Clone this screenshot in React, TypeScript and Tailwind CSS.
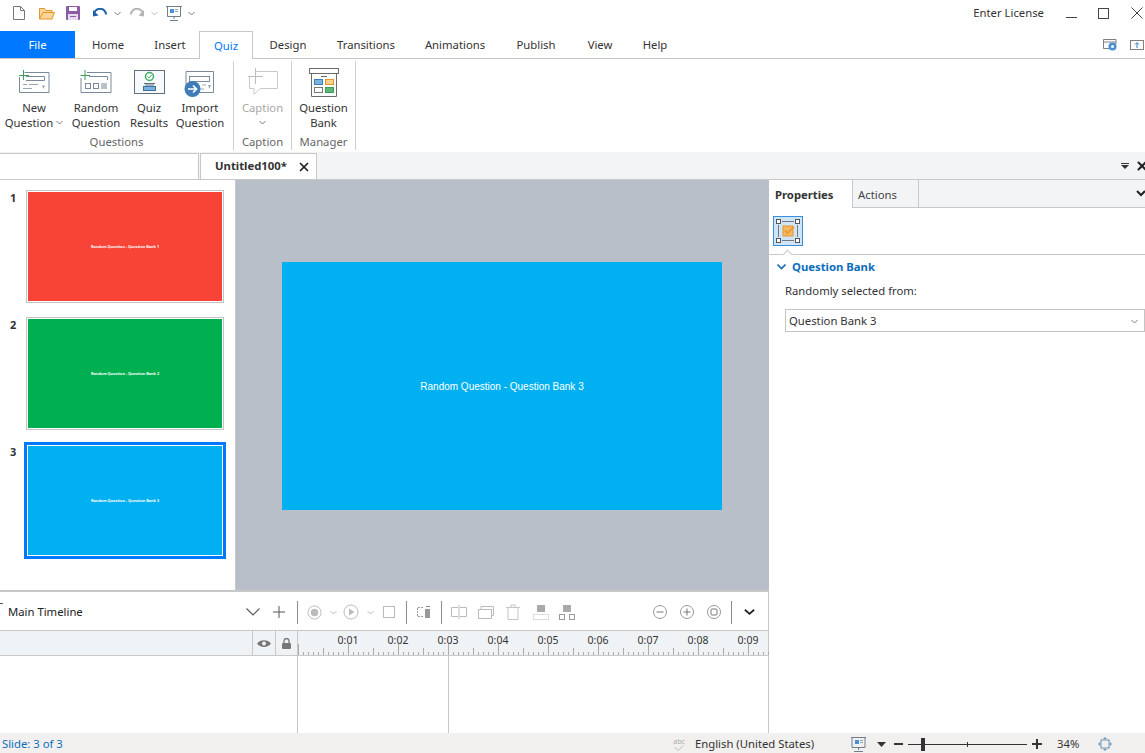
import React from 'react';
import { X } from 'lucide-react';

const tabs = [
  { label: 'Home', w: 'w-[66px]' },
  { label: 'Insert', w: 'w-[58px]' },
  { label: 'Quiz', w: 'w-[54px]', active: true },
  { label: 'Design', w: 'w-[70px]' },
  { label: 'Transitions', w: 'w-[86px]' },
  { label: 'Animations', w: 'w-[92px]' },
  { label: 'Publish', w: 'w-[70px]' },
  { label: 'View', w: 'w-[58px]' },
  { label: 'Help', w: 'w-[52px]' },
];

const Caret = ({ className = '' }: { className?: string }) => (
  <svg width="7" height="5" viewBox="0 0 7 5" className={className}>
    <path d="M0.5 1 L3.5 4 L6.5 1" fill="none" stroke="#7a7a7a" />
  </svg>
);

const QuickAccess = () => (
  <div className="flex h-[31px] items-center pb-[5px] pl-[12px]">
    <svg width="14" height="16" viewBox="0 0 14 16" className="mr-[13px]">
      <path d="M1.5 1.5H8.5L12.5 5.5V14.5H1.5Z M8.5 1.5V5.5H12.5" fill="#fff" stroke="#777" />
    </svg>
    <svg width="16" height="13" viewBox="0 0 16 13" className="mr-[11px]">
      <path d="M0.5 12V1.5H5.5L7 3.5H13V5.5H4L0.5 12H13L15.5 5.5H4" fill="#fcd59a" stroke="#e8962b" />
    </svg>
    <svg width="14" height="14" viewBox="0 0 14 14" className="mr-[13px]">
      <rect x="0" y="0" width="14" height="14" rx="1" fill="#8e5ba6" />
      <rect x="3" y="1" width="8" height="4" fill="#fff" />
      <rect x="2" y="8" width="10" height="6" fill="#e8dcef" />
      <rect x="4" y="10" width="6" height="1" fill="#8e5ba6" />
    </svg>
    <svg width="14" height="10" viewBox="0 0 14 10" className="mr-[7px]">
      <path d="M1 7 A6 6 0 0 1 13 6.5" fill="none" stroke="#1d5fa8" strokeWidth="2" />
      <path d="M0 2 L5.5 7.5 L0 8.5Z" fill="#1d5fa8" />
    </svg>
    <Caret className="mr-[9px]" />
    <svg width="14" height="10" viewBox="0 0 14 10" className="mr-[7px]">
      <path d="M13 7 A6 6 0 0 0 1 6.5" fill="none" stroke="#b5b5b5" strokeWidth="2" />
      <path d="M14 2 L8.5 7.5 L14 8.5Z" fill="#b5b5b5" />
    </svg>
    <Caret className="mr-[8px] opacity-50" />
    <svg width="16" height="15" viewBox="0 0 16 15" className="mr-[6px]">
      <path d="M0 0.5H16 M1.5 0.5V10.5H14.5V0.5 M8 10.5V13 M4 14.5H12" fill="none" stroke="#6f7f8c" />
      <rect x="4" y="3" width="4" height="4" fill="#4a90d9" />
      <path d="M9 3.5H12 M9 5.5H12" stroke="#8aa" />
    </svg>
    <Caret />
    <span className="ml-auto mr-[22px] text-[11.3px] text-[#333]">Enter License</span>
    <div className="flex items-center gap-[21px] pr-[2px]">
      <svg width="11" height="12" viewBox="0 0 11 12"><path d="M0 10.5H11" stroke="#444" /></svg>
      <svg width="11" height="11" viewBox="0 0 11 11"><rect x="0.5" y="0.5" width="10" height="10" fill="none" stroke="#444" /></svg>
      <svg width="12" height="12" viewBox="0 0 12 12" className="ml-px"><path d="M0.5 0.5L11.5 11.5 M11.5 0.5L0.5 11.5" stroke="#444" /></svg>
    </div>
  </div>
);

const TabRow = () => (
  <div className="flex h-[28px] border-b border-[#c8c8c8]">
    <div className="flex h-[27px] w-[75px] items-center justify-center bg-[#0078ff] pt-px text-[11.3px] text-white">File</div>
    {tabs.map((t) =>
      t.active ? (
        <div key={t.label} className={`${t.w} -mb-px flex h-[28px] items-center justify-center border border-b-0 border-[#c8c8c8] bg-white pt-px text-[11.3px] text-[#0078ff]`}>
          {t.label}
        </div>
      ) : (
        <div key={t.label} className={`${t.w} flex items-center justify-center pt-px text-[11.3px] text-[#333]`}>
          {t.label}
        </div>
      )
    )}
    <div className="ml-auto flex items-center gap-[13px] pr-px">
      <svg width="14" height="12" viewBox="0 0 14 12">
        <path d="M0.5 0.5H13V5 M0.5 0.5V9.5H6 M0.5 3H13" fill="none" stroke="#808080" />
        <circle cx="9.5" cy="7.5" r="4" fill="#4a90d9" />
        <circle cx="9.5" cy="7.5" r="1.5" fill="#fff" />
      </svg>
      <svg width="14" height="10" viewBox="0 0 14 10">
        <rect x="0.5" y="0.5" width="13" height="9" fill="none" stroke="#808080" />
        <path d="M7 8V3 M5 4.5L7 2.5L9 4.5" fill="none" stroke="#2f7fc8" />
      </svg>
    </div>
  </div>
);

const NewQuestionIcon = () => (
  <svg width="32" height="24" viewBox="0 0 32 24" className="mt-[9px]">
    <path d="M6.5 2.5H31V22.5H1.5V7" fill="none" stroke="#7b8a99" />
    <path d="M8 6.5H26.5V10.5H8" fill="none" stroke="#7b8a99" />
    <path d="M1 5.5H11 M5.5 0V10" stroke="#3e9d5c" />
    <path d="M5 14.5H9 M11 14.5H20 M5 18.5H14" stroke="#9aa7b3" />
    <path d="M24 15.5H27 L25.5 19Z" fill="#9aa7b3" />
  </svg>
);

const RandomIcon = () => (
  <svg width="32" height="24" viewBox="0 0 32 24" className="mt-[9px]">
    <path d="M7 2.5H31V22.5H1V8" fill="none" stroke="#7b8a99" />
    <path d="M9 6.5H27.5V10" fill="none" stroke="#7b8a99" />
    <path d="M0.5 5.5H10 M5 0V10" stroke="#3e9d5c" />
    <rect x="5.5" y="13.5" width="5" height="5" fill="none" stroke="#7b8a99" />
    <rect x="13.5" y="13.5" width="5" height="5" fill="none" stroke="#7b8a99" />
    <rect x="21" y="13" width="6" height="6" fill="#b8c0c8" />
  </svg>
);

const ResultsIcon = () => (
  <svg width="31" height="24" viewBox="0 0 31 24" className="mt-[9px]">
    <rect x="0.5" y="0.5" width="30" height="23" fill="#f8f9fa" stroke="#5f6f7f" />
    <circle cx="15.5" cy="6.5" r="4" fill="none" stroke="#3fae64" strokeWidth="1.5" />
    <path d="M13.5 6.5L15 8L17.5 5" fill="none" stroke="#3fae64" />
    <path d="M10 13.5H21 M11 15H20" stroke="#5f6f7f" />
    <rect x="9.5" y="16.5" width="12" height="4" fill="#7ab3e0" stroke="#3b6f9c" />
  </svg>
);

const ImportIcon = () => (
  <svg width="32" height="27" viewBox="0 0 32 27" className="mt-[10px]">
    <path d="M2 14V0.5H29.5V21.5H14" fill="none" stroke="#7b8a99" />
    <rect x="5.5" y="5.5" width="20" height="5" fill="none" stroke="#7b8a99" />
    <path d="M18 14H22 M16 18H20" stroke="#9aa7b3" />
    <path d="M24 14H27 L25.5 18Z" fill="#9aa7b3" />
    <circle cx="8.5" cy="18" r="8" fill="#3f7cb8" />
    <path d="M4 18H12 M9 14.5L12.5 18L9 21.5" fill="none" stroke="#fff" strokeWidth="1.7" />
  </svg>
);

const CaptionIcon = () => (
  <svg width="30" height="28" viewBox="0 0 30 28" className="mt-[7px]">
    <path d="M8 3.5H29.5V20.5H12L6 26.5V20.5H1.5V9" fill="none" stroke="#c9c9c9" />
    <path d="M0 8.5H15 M7.5 0V16" stroke="#bdbdbd" />
  </svg>
);

const BankIcon = () => (
  <svg width="30" height="29" viewBox="0 0 30 29" className="mt-[7px]">
    <rect x="0.5" y="0.5" width="29" height="5" fill="none" stroke="#6b6b6b" />
    <path d="M2.5 5.5V28.5H27.5V5.5" fill="none" stroke="#6b6b6b" />
    <path d="M12 8.5H18" stroke="#6b6b6b" />
    <rect x="5.5" y="11.5" width="8" height="5" fill="#7ab3e0" stroke="#3b7fb8" />
    <rect x="16.5" y="11.5" width="8" height="5" fill="#fbd38d" stroke="#e8962b" />
    <rect x="5.5" y="19.5" width="8" height="5" fill="#fff" stroke="#777" />
    <rect x="16.5" y="19.5" width="8" height="5" fill="#5cb874" stroke="#3f9d5c" />
  </svg>
);

const RibbonButton = ({ icon, lines, w, caret, disabled }: { icon: React.ReactNode; lines: string[]; w: string; caret?: boolean; disabled?: boolean }) => (
  <div className={`${w} flex flex-col items-center text-[11.3px] leading-[15px] ${disabled ? 'text-[#a8a8a8]' : 'text-[#333]'}`}>
    <div className="flex h-[39px] items-start justify-center">{icon}</div>
    <div className="text-center">{lines[0]}</div>
    <div className="flex h-[15px] items-center justify-center gap-[3px] whitespace-nowrap">
      {lines[1]}
      {caret && <Caret />}
    </div>
  </div>
);

const RibbonGroup = ({ label, w, children }: { label: string; w: string; children: React.ReactNode }) => (
  <div className={`${w} flex h-[89px] flex-col border-r border-[#d0d0d0] pb-px`}>
    <div className="flex flex-1">{children}</div>
    <div className="text-center text-[11.3px] leading-[15px] text-[#666]">{label}</div>
  </div>
);

const Ribbon = () => (
  <div className="flex h-[93px] bg-white pt-[2px]">
    <RibbonGroup label="Questions" w="w-[234px]">
      <RibbonButton w="w-[68px]" icon={<NewQuestionIcon />} lines={['New', 'Question']} caret />
      <RibbonButton w="w-[56px]" icon={<RandomIcon />} lines={['Random', 'Question']} />
      <RibbonButton w="w-[50px]" icon={<ResultsIcon />} lines={['Quiz', 'Results']} />
      <RibbonButton w="w-[52px]" icon={<ImportIcon />} lines={['Import', 'Question']} />
    </RibbonGroup>
    <RibbonGroup label="Caption" w="w-[58px]">
      <RibbonButton w="w-full" icon={<CaptionIcon />} lines={['Caption', '']} caret disabled />
    </RibbonGroup>
    <RibbonGroup label="Manager" w="w-[64px]">
      <RibbonButton w="w-full" icon={<BankIcon />} lines={['Question', 'Bank']} />
    </RibbonGroup>
  </div>
);

const DocTabs = () => (
  <div className="flex h-[28px] border-b border-[#c8c8c8] bg-[#f3f4f6] pt-px">
    <div className="w-[199px] border-t border-r border-[#c8c8c8] bg-white" />
    <div className="ml-px flex w-[117px] items-center gap-[10px] border-x border-t border-[#c8c8c8] bg-white pl-[14px] text-[11.3px] font-bold text-[#333]">
      Untitled100*
      <X size={14} strokeWidth={3} className="text-[#222]" />
    </div>
    <div className="ml-auto flex items-center gap-[6px]">
      <svg width="8" height="6" viewBox="0 0 8 6">
        <path d="M0 0H8V1H0Z M0 2H8L4 6Z" fill="#333" />
      </svg>
      <X size={14} strokeWidth={3.5} className="-mr-[4px] text-[#222]" />
    </div>
  </div>
);

const slides = [
  { n: 1, bg: 'bg-[#f74436]', text: 'Random Question - Question Bank 1' },
  { n: 2, bg: 'bg-[#00b050]', text: 'Random Question - Question Bank 2' },
  { n: 3, bg: 'bg-[#00b0f0]', text: 'Random Question - Question Bank 3', active: true },
];

const SlidePanel = () => (
  <div className="flex w-[236px] shrink-0 flex-col border-r border-[#c8c8c8] bg-white pt-[10px]">
    {slides.map((s) => (
      <div key={s.n} className={`flex pl-[10px] ${s.active ? '-mt-[2px]' : 'mb-[14px]'}`}>
        <div className={`w-[14px] text-[11px] font-bold leading-[13px] text-[#333] ${s.active ? 'pt-[3px]' : 'pt-[1px]'}`}>{s.n}</div>
        {s.active ? (
          <div className="h-[117px] w-[202px] border-[3px] border-[#0078ff] bg-white p-px">
            <div className={`${s.bg} flex h-full items-center justify-center text-[3.8px] font-bold text-white`}>{s.text}</div>
          </div>
        ) : (
          <div className="ml-[2px] h-[113px] w-[198px] border border-[#c4c4c4] bg-white p-px">
            <div className={`${s.bg} flex h-full items-center justify-center text-[3.8px] font-bold text-white`}>{s.text}</div>
          </div>
        )}
      </div>
    ))}
  </div>
);

const Canvas = () => (
  <div className="flex flex-1 items-center justify-center bg-[#b8bfc8] pr-px pt-[2px]">
    <div className="flex h-[248px] w-[440px] items-center justify-center bg-[#00b0f0] font-['Liberation_Sans',sans-serif] text-[10px] text-white">
      Random Question - Question Bank 3
    </div>
  </div>
);

const Divider = () => <div className="h-[23px] w-px bg-[#8c8c8c]" />;

const TimelineBar = () => (
  <div className="relative flex h-[39px] items-center border-b border-[#c8c8c8] bg-white pr-[13px] pt-[2px]">
    <div className="absolute left-0 top-[11px] h-px w-[3px] bg-[#555]" />
    <div className="w-[246px] pl-[8px] text-[11.3px] text-[#222]">Main Timeline</div>
    <svg width="14" height="8" viewBox="0 0 14 8"><path d="M0.5 0.5L7 7L13.5 0.5" fill="none" stroke="#555" strokeWidth="1.1" /></svg>
    <svg width="12" height="12" viewBox="0 0 12 12" className="ml-[13px]"><path d="M0 6H12 M6 0V12" stroke="#555" /></svg>
    <div className="ml-[12px]"><Divider /></div>
    <svg width="15" height="15" viewBox="0 0 16 16" className="ml-[9px]">
      <circle cx="8" cy="8" r="7" fill="none" stroke="#bbb" />
      <circle cx="8" cy="8" r="4" fill="#bbb" />
    </svg>
    <Caret className="ml-[8px] opacity-50" />
    <svg width="16" height="16" viewBox="0 0 16 16" className="ml-[6px]">
      <circle cx="8" cy="8" r="7" fill="none" stroke="#bbb" />
      <path d="M6 4.5L11.5 8L6 11.5Z" fill="#bbb" />
    </svg>
    <Caret className="ml-[8px] opacity-50" />
    <div className="ml-[9px] h-[12px] w-[12px] border border-[#bbb]" />
    <div className="ml-[11px]"><Divider /></div>
    <svg width="14" height="16" viewBox="0 0 14 16" className="ml-[10px]">
      <path d="M6 3.5H0.5V12.5H6" fill="none" stroke="#999" strokeDasharray="2 1" />
      <rect x="8" y="5" width="5" height="9" fill="#999" />
      <path d="M9 2.5H13" stroke="#888" />
    </svg>
    <div className="ml-[10px]"><Divider /></div>
    <svg width="16" height="14" viewBox="0 0 16 14" className="ml-[9px]">
      <path d="M7 2.5H0.5V11.5H7 M9 2.5H15.5V11.5H9 M8 0V14" fill="none" stroke="#bbb" />
    </svg>
    <svg width="16" height="13" viewBox="0 0 16 13" className="ml-[11px]">
      <rect x="0.5" y="3.5" width="13" height="9" fill="none" stroke="#bbb" />
      <path d="M3 3.5V0.5H15.5V9.5H13.5" fill="none" stroke="#bbb" />
    </svg>
    <svg width="14" height="16" viewBox="0 0 14 16" className="ml-[12px]">
      <path d="M0 3.5H14 M5 3.5V1H9V3.5 M2 3.5V15.5H12V3.5" fill="none" stroke="#c4c4c4" />
    </svg>
    <svg width="16" height="15" viewBox="0 0 16 15" className="ml-[13px]">
      <rect x="4" y="0" width="8" height="7" fill="#aaa" />
      <rect x="0.5" y="9.5" width="15" height="5" fill="none" stroke="#bbb" strokeDasharray="1 1" />
    </svg>
    <svg width="16" height="15" viewBox="0 0 16 15" className="ml-[10px]">
      <rect x="4" y="0" width="8" height="7" fill="#aaa" />
      <rect x="0.5" y="9.5" width="5" height="5" fill="none" stroke="#999" />
      <rect x="10.5" y="9.5" width="5" height="5" fill="none" stroke="#999" />
    </svg>
    <div className="ml-auto flex items-center gap-[13px]">
      <svg width="14" height="14" viewBox="0 0 14 14"><circle cx="7" cy="7" r="6.5" fill="none" stroke="#999" /><path d="M3.5 7H10.5" stroke="#777" /></svg>
      <svg width="14" height="14" viewBox="0 0 14 14"><circle cx="7" cy="7" r="6.5" fill="none" stroke="#999" /><path d="M3.5 7H10.5 M7 3.5V10.5" stroke="#777" /></svg>
      <svg width="14" height="14" viewBox="0 0 14 14"><circle cx="7" cy="7" r="6.5" fill="none" stroke="#999" /><rect x="4" y="4" width="6" height="6" rx="1" fill="none" stroke="#777" /></svg>
      <div className="-ml-[3px]"><Divider /></div>
      <svg width="11" height="8" viewBox="0 0 12 8" className="-ml-px"><path d="M1 1.5L6 6L11 1.5" fill="none" stroke="#222" strokeWidth="2" /></svg>
    </div>
  </div>
);

const Ruler = () => {
  const ticks = Array.from({ length: 95 }, (_, i) => i);
  return (
    <div className="relative h-full flex-1">
      {Array.from({ length: 9 }, (_, i) => (
        <span key={i} className="absolute top-[2px] w-[30px] -translate-x-1/2 text-center text-[10.5px] leading-[14px] text-[#333]" style={{ left: 50 * (i + 1) }}>
          0:0{i + 1}
        </span>
      ))}
      <svg width="471" height="24" className="absolute left-0 top-0">
        {ticks.map((i) => {
          const h = i % 10 === 0 ? 11 : i % 5 === 0 ? 7 : 3;
          return <path key={i} d={`M${i * 5 + 0.5} 24V${24 - h}`} stroke="#aaaaaa" />;
        })}
      </svg>
    </div>
  );
};

const Timeline = () => (
  <div className="flex h-[143px] flex-col border-t-2 border-r border-[#c8c8c8]">
    <TimelineBar />
    <div className="flex h-[25px] border-b border-[#c8c8c8] bg-[#f0f3f6]">
      <div className="w-[253px] border-r border-[#c8c8c8]" />
      <div className="flex w-[23px] items-center justify-center border-r border-[#c8c8c8]">
        <svg width="14" height="9" viewBox="0 0 14 9">
          <path d="M0 4.5C3 0 11 0 14 4.5C11 9 3 9 0 4.5Z" fill="#777" />
          <circle cx="7" cy="4.5" r="2" fill="#f0f3f6" />
        </svg>
      </div>
      <div className="flex w-[22px] items-center justify-center border-r border-[#c8c8c8]">
        <svg width="9" height="11" viewBox="0 0 9 11">
          <path d="M2 5V3A2.5 2.5 0 0 1 7 3V5" fill="none" stroke="#777" strokeWidth="1.3" />
          <rect x="0" y="5" width="9" height="6" rx="1" fill="#777" />
        </svg>
      </div>
      <Ruler />
    </div>
    <div className="relative flex-1 bg-white">
      <div className="absolute left-[297px] top-0 h-full w-px bg-[#c8c8c8]" />
      <div className="absolute left-[448px] top-0 h-full w-px bg-[#c8c8c8]" />
    </div>
  </div>
);

const PropertiesPanel = () => (
  <div className="flex flex-1 flex-col bg-white">
    <div className="flex h-[28px] border-b border-[#c8c8c8] bg-[#f3f4f6]">
      <div className="-mb-px flex w-[84px] items-center border-r border-[#c8c8c8] bg-white pl-[6px] pt-[3px] text-[11.3px] font-bold text-[#333]">Properties</div>
      <div className="flex w-[66px] items-center border-r border-[#c8c8c8] pl-[5px] pt-[3px] text-[11.3px] text-[#444]">Actions</div>
      <svg width="10" height="7" viewBox="0 0 10 7" className="ml-auto mt-[10px] -mr-[1px]"><path d="M1 1L5 5L9 1" fill="none" stroke="#222" strokeWidth="2" /></svg>
    </div>
    <div className="relative h-[47px] border-b border-[#c8c8c8] pl-[4px] pt-[8px]">
      <div className="flex h-[30px] w-[30px] items-center justify-center border border-[#3a8fdc] bg-[#cfe4f7]">
        <svg width="24" height="24" viewBox="0 0 24 24">
          <path d="M6 2.5H18 M6 21.5H18 M2.5 6V18 M21.5 6V18" stroke="#777" />
          <rect x="0.5" y="0.5" width="4" height="4" fill="#fff" stroke="#555" />
          <rect x="19.5" y="0.5" width="4" height="4" fill="#fff" stroke="#555" />
          <rect x="0.5" y="19.5" width="4" height="4" fill="#fff" stroke="#555" />
          <rect x="19.5" y="19.5" width="4" height="4" fill="#fff" stroke="#555" />
          <rect x="7" y="7" width="10" height="10" fill="#f5b860" stroke="#e8962b" />
          <path d="M9 11.5L11.5 14L18 8" fill="none" stroke="#e8962b" strokeWidth="1.5" />
        </svg>
      </div>
      <div className="absolute -bottom-[4px] left-[15px] h-[7px] w-[7px] rotate-45 border-l border-t border-[#c8c8c8] bg-white" />
    </div>
    <div className="flex items-center pl-[8px] pt-[4px] leading-[16px]">
      <svg width="9" height="6" viewBox="0 0 9 6"><path d="M0.5 0.5L4.5 4.5L8.5 0.5" fill="none" stroke="#1a6fb5" strokeWidth="1.6" /></svg>
      <span className="ml-[6px] text-[11.3px] font-bold text-[#0a6ebd]">Question Bank</span>
    </div>
    <div className="pl-[16px] pt-[8px] text-[11.3px] leading-[16px] text-[#333]">Randomly selected from:</div>
    <div className="ml-[16px] mt-[10px] flex h-[23px] items-center justify-between border border-[#c4c4c4] pl-[3px] pr-[6px] pt-px text-[11.3px] text-[#333]">
      Question Bank 3
      <Caret />
    </div>
  </div>
);

const StatusBar = () => (
  <div className="flex h-[20px] items-center bg-[#f1f0ef] pt-[2px] text-[11.3px]">
    <span className="pl-[2px] text-[#0a6ebd]">Slide: 3 of 3</span>
    <div className="ml-auto flex items-center">
      <div className="mr-[10px] flex w-[12px] flex-col items-center text-[7px] leading-[7px] text-[#aaa]">
        abc
        <svg width="10" height="6" viewBox="0 0 10 6"><path d="M0.5 2L4 5.5L9.5 0.5" fill="none" stroke="#bbb" /></svg>
      </div>
      <span className="mr-[38px] w-[118px] whitespace-nowrap text-[#333]">English (United States)</span>
      <svg width="15" height="15" viewBox="0 0 15 15" className="mr-[11px]">
        <path d="M0 0.5H15 M1 0.5V10.5H14V0.5 M7.5 10.5V13 M3 14.5H12" fill="none" stroke="#6f7f8c" />
        <rect x="4" y="3" width="4" height="4" fill="#4a90d9" />
        <path d="M9 3.5H12 M9 5.5H12" stroke="#8aa" />
      </svg>
      <svg width="9" height="5" viewBox="0 0 9 5" className="mr-[8px]"><path d="M0 0H9L4.5 5Z" fill="#333" /></svg>
      <div className="h-[2px] w-[9px] bg-[#333]" />
      <div className="relative ml-[5px] mr-[5px] h-px w-[119px] bg-[#333]">
        <div className="absolute -top-[6px] left-[13px] h-[13px] w-[4px] bg-[#333]" />
        <div className="absolute -top-[2px] left-[59px] h-[5px] w-px bg-[#333]" />
      </div>
      <svg width="10" height="10" viewBox="0 0 10 10"><path d="M0 5H10 M5 0V10" stroke="#333" strokeWidth="2" /></svg>
      <span className="ml-[15px] mr-[17px] w-[24px] whitespace-nowrap text-[#333]">34%</span>
      <svg width="14" height="14" viewBox="0 0 14 14" className="mr-[33px]">
        <rect x="3" y="3" width="8" height="8" fill="none" stroke="#6f8fa8" />
        <path d="M7 0L9 2H5Z M7 14L5 12H9Z M0 7L2 5V9Z M14 7L12 9V5Z" fill="#5a9bd5" />
      </svg>
    </div>
  </div>
);

export default function App() {
  return (
    <div className="flex h-[753px] w-[1145px] flex-col overflow-hidden bg-white font-['Noto_Sans',sans-serif]">
      <QuickAccess />
      <TabRow />
      <Ribbon />
      <DocTabs />
      <div className="flex min-h-0 flex-1">
        <div className="flex w-[769px] shrink-0 flex-col">
          <div className="flex min-h-0 flex-1">
            <SlidePanel />
            <Canvas />
          </div>
          <Timeline />
        </div>
        <PropertiesPanel />
      </div>
      <StatusBar />
    </div>
  );
}
